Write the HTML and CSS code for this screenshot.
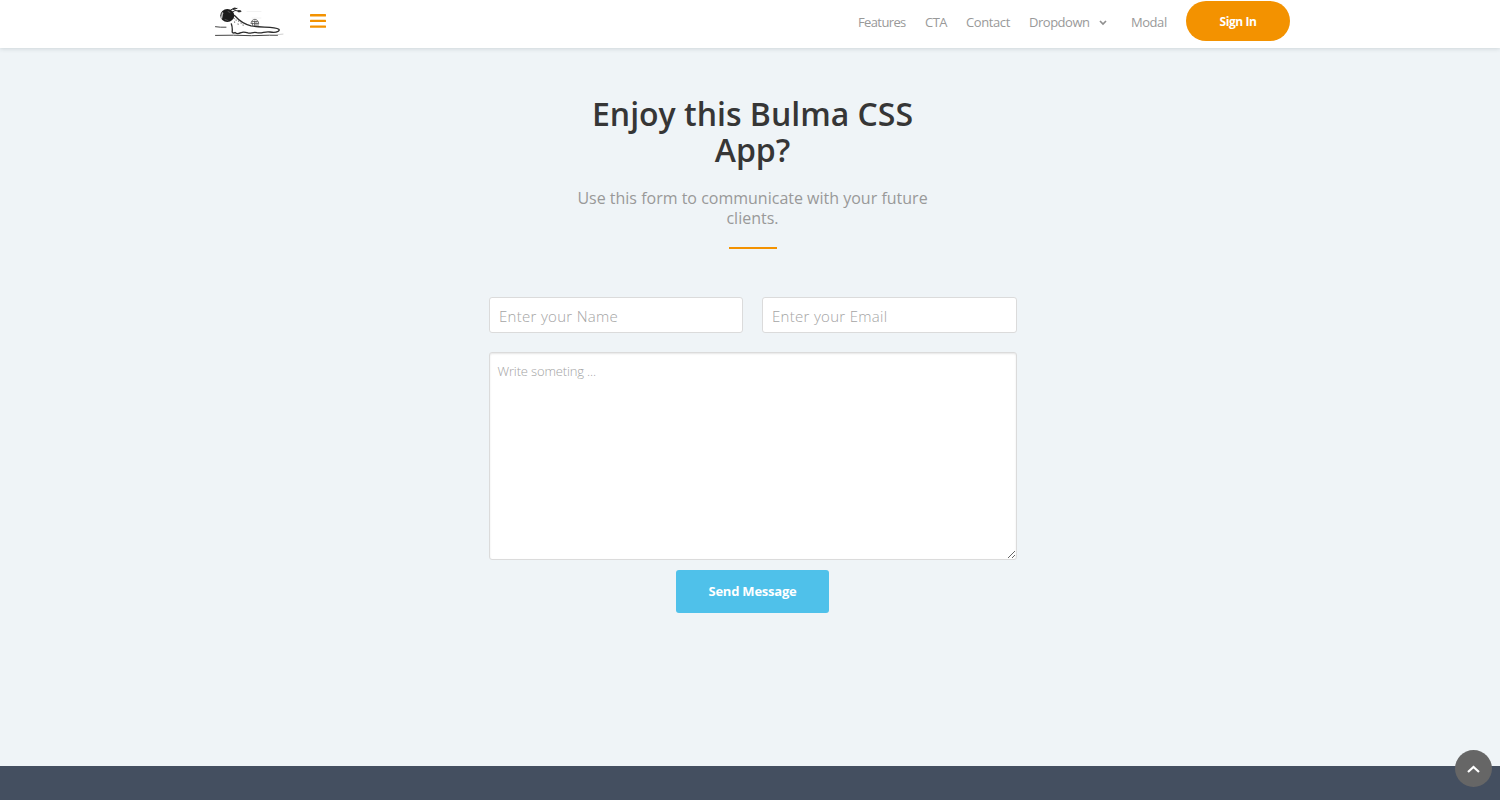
FILE: index.html
```
<!DOCTYPE html>
<html lang="en">
<head>
<meta charset="utf-8">
<title>Bulma CSS App</title>
<link rel="stylesheet" href="styles.css">
</head>
<body>
<header class="navbar">
  <div class="brand">
    <a class="logo" href="#" aria-label="Home">
      <svg width="70" height="32" viewBox="0 0 70 32" fill="none" stroke="#2c2c2c" stroke-linecap="round" stroke-linejoin="round">
        <path d="M33 5.500h14M38 12h9M42 21h13" stroke="#f2f2f2"/>
        <path d="M1.500 20.700l5 .5 5.500 0M1.500 29.400l18-.2 18 .5 18-.5 8 .1" stroke="#444" stroke-width="1"/>
        <path d="M63 28.700l6-.6" stroke="#bbb" stroke-width=".7"/>
        <path d="M14 6l4-2.800 5-.8M17 7l4-2.500 6 .8" stroke-width="1"/>
        <path d="M19.500 2.900l1.500-.4M24.500 5.200l1.500.1" stroke-width="2"/>
        <ellipse cx="13.300" cy="9.500" rx="7" ry="6.500" fill="#1c1c1c" stroke="none"/>
        <path d="M8.500 7l-1 5" stroke="#bbb" stroke-width="1.500"/>
        <path d="M11 13.500l3 1M14 5.500l2 1" stroke="#666" stroke-width=".7"/>
        <path d="M20.500 9.500C25 14.500 29 18 37 19.800c8 1.500 16 1 23 2 5 .7 6.500 2 4 3.600-2.500 1.500-5 1.200-8 .6-5-1-8 1.800-13 .7-4-1-6 1-9 .2-3-1-5-1.500-7-.2-2.500 1.200-4 1.500-6-.2-1.300 1-3 .5-2.800-1.200.3-3 .2-4.500-.9-7.500" stroke-width="1.300"/>
        <path d="M20 12.500l.2.200M22 14l.2.200M24.500 15l.2.200M20.500 16l.2.200M24 18l.2.200M27 17l.2.200M29 19l.2.200" stroke="#666" stroke-width="1.100"/>
        <path d="M37 17.200c.5-2.300 1.500-3.700 4-3.900 2.300.3 3.300 1.800 3.700 3.900zM38.500 17v2.500M40.500 15v4.500M42 15v4.500M44 17v3M38 15.500h5.500" stroke="#555" stroke-width=".8"/>
      </svg>
    </a>
    <a class="burger" href="#" aria-label="Menu">
      <svg width="16" height="14" viewBox="0 0 16 14" fill="#f39200"><rect width="16" height="2.400" rx=".5"/><rect y="5.700" width="16" height="2.400" rx=".5"/><rect y="11.400" width="16" height="2.400" rx=".5"/></svg>
    </a>
  </div>
  <nav class="menu">
    <a class="link features" href="#">Features</a>
    <a class="link cta" href="#">CTA</a>
    <a class="link contact" href="#">Contact</a>
    <a class="link dropdown" href="#"><span>Dropdown</span><svg width="8" height="6" viewBox="0 0 8 6" fill="none" stroke="#8f8f8f" stroke-width="1.700"><path d="M1 1l3 3 3-3"/></svg></a>
    <a class="link modal" href="#">Modal</a>
    <a class="signin" href="#">Sign In</a>
  </nav>
</header>
<main class="section">
  <div class="heading">
    <h1 class="title">Enjoy this Bulma CSS<br>App?</h1>
    <p class="subtitle">Use this form to communicate with your future<br>clients.</p>
    <div class="divider"></div>
  </div>
  <form class="form">
    <div class="row">
      <input class="input" type="text" placeholder="Enter your Name">
      <input class="input" type="email" placeholder="Enter your Email">
    </div>
    <textarea class="textarea" placeholder="Write someting ..."></textarea>
    <button class="send" type="button">Send Message</button>
  </form>
</main>
<footer class="footer"></footer>
<a class="totop" href="#" aria-label="Back to top"><svg width="13" height="8" viewBox="0 0 13 8" fill="none" stroke="#fff" stroke-width="2.200"><path d="M1 7l5.500-5L12 7"/></svg></a>
</body>
</html>
```
FILE: styles.css
```
* { box-sizing: border-box; }
html { overflow: hidden; }
body { margin: 0; height: 800px; display: flex; flex-direction: column; background: #eff4f7; font-family: "Open Sans", "Noto Sans", sans-serif; overflow: hidden; }
a { text-decoration: none; }
.navbar { height: 48px; flex: none; padding: 0 210px 0 214px; display: flex; justify-content: space-between; background: #fff; box-shadow: 0 1px 4px rgba(60, 80, 90, .18); }
.brand { display: flex; align-items: flex-start; }
.logo { height: 32px; margin-top: 6px; }
.burger { margin: 14px 0 0 26px; line-height: 0; }
.menu { display: flex; align-items: flex-start; }
.link { font-size: 13px; line-height: 18px; margin-top: 13px; color: #999; white-space: nowrap; }
.features { width: 67px; letter-spacing: -.62px; }
.cta { width: 41px; letter-spacing: -.55px; }
.contact { width: 63px; letter-spacing: -.4px; }
.dropdown { width: 102px; display: flex; align-items: center; gap: 9px; letter-spacing: -.48px; }
.dropdown svg { margin-top: 2px; }
.modal { width: 55px; letter-spacing: -.45px; }
.signin { width: 104px; height: 40px; margin-top: 1px; border-radius: 20px; background: #f39200; color: #fff; font-size: 12px; line-height: 42px; font-weight: 700; text-align: center; letter-spacing: -.45px; }
.section { flex: 1; padding: 48px 0 0 489px; }
.heading { width: 528px; text-align: center; }
.title { margin: 0 1px 0 0; color: #363636; font-size: 32px; line-height: 36px; font-weight: 600; white-space: nowrap; }
.subtitle { margin: 20px 1px 0 0; color: #999; font-size: 16px; line-height: 20px; white-space: nowrap; }
.divider { width: 48px; height: 2px; margin: 19px auto 0; background: #f39200; }
.form { width: 528px; margin-top: 48px; display: flex; flex-direction: column; }
.row { display: grid; grid-template-columns: 254px 255px; gap: 19px; }
.input { min-width: 0; height: 36px; padding: 1px 9px 0; border: 1px solid #dbdbdb; border-radius: 3px; background: #fff; font: 300 15px "Open Sans", sans-serif; letter-spacing: .3px; }
.textarea { height: 208px; margin: 19px 0 10px; padding: 9px 8px 9px 7.500px; border: 1px solid #dbdbdb; border-radius: 3px; background: #fff; box-shadow: inset 0 1px 2px rgba(10, 10, 10, .1); font: 300 13px/18px "Open Sans", sans-serif; letter-spacing: -.15px; resize: both; }
.input::placeholder, .textarea::placeholder { color: #a4a4a4; opacity: 1; }
.send { width: 153px; height: 43px; margin-left: 187px; padding: 0 0 2px; border: 0; border-radius: 3px; background: #4fc1ea; color: #fff; font: 700 13px "Open Sans", sans-serif; letter-spacing: -.22px; }
.footer { height: 34px; flex: none; background: #444f60; }
.totop { position: fixed; right: 8px; bottom: 13px; width: 37px; height: 37px; border-radius: 50%; background: #666; display: flex; align-items: center; justify-content: center; }
```
